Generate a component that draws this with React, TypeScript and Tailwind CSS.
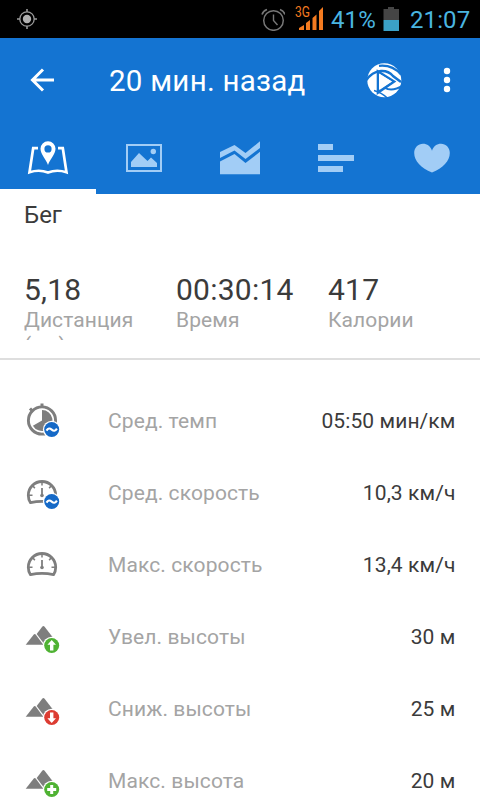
import type { ReactNode } from "react";

type Badge = "avg" | "up" | "down" | "plus";

function StatusBar() {
  return (
    <div className="flex h-[38px] items-center bg-black">
      <svg className="ml-[17px] shrink-0" width="20" height="20" viewBox="0 0 20 20" fill="none" stroke="#999">
        <circle cx="10" cy="10" r="7.2" strokeWidth="1.3" />
        <circle cx="10" cy="10" r="4.2" fill="#b0b0b0" stroke="none" />
        <path d="M10 0v3M10 17v3M0 10h3M17 10h3" strokeWidth="1.6" />
      </svg>
      <svg className="ml-[224px] shrink-0" width="24" height="24" viewBox="0 0 24 24" fill="none" stroke="#777">
        <circle cx="12.500" cy="13.500" r="9.800" strokeWidth="1.5" />
        <path d="M12.500 7.500v6l4 4.500" strokeWidth="1.4" />
        <path d="M1 7.500a8 8 0 0 1 5-5M24 7.500a8 8 0 0 0-5-5" strokeWidth="1.6" />
      </svg>
      <svg className="ml-[10px] shrink-0 overflow-visible" width="29" height="26" viewBox="0 0 29 26">
        <text x="0" y="11" fontSize="14" fontFamily="Roboto, sans-serif" fill="#f47b20" textLength="15" lengthAdjust="spacingAndGlyphs">3G</text>
        <path d="M4 24v-2l5-3v5zM11 24v-7l4-3v10zM17.500 24V12l4-3.500V24zM24 24V5l4-4V24z" fill="#f47b20" />
      </svg>
      <span className="ml-[7px] w-[46px] pt-[2px] text-[24px] leading-[36px] tracking-[0.1px] text-[#4ab5e0]">41%</span>
      <svg className="ml-[6px] shrink-0" width="16" height="24" viewBox="0 0 16 24">
        <path d="M5 0h6v2h5v11H.5V2H5z" fill="#454545" />
        <path d="M.5 13H16v11H.5z" fill="#3ba1c7" />
      </svg>
      <span className="ml-[11px] whitespace-nowrap pt-[2px] text-[24px] leading-[36px] tracking-[0.1px] text-[#4ab5e0]">21:07</span>
    </div>
  );
}

function ReplayIcon() {
  return (
    <svg className="shrink-0" width="40" height="40" viewBox="0 0 40 40">
      <circle cx="20.300" cy="20.300" r="17" fill="#fff" />
      <g fill="none" stroke="#1474d2">
        <path d="M2 20.500C6 14.500 11 11.500 17 11c6-.4 9 1.500 12 5l8 6" strokeWidth="2.400" />
        <path d="M15 5.800c9-1 16 1.700 22 8.700" strokeWidth="2.200" />
        <path d="M10 30.500c4 1 9 3.500 14 8" strokeWidth="1.300" />
        <path d="M21 27.800c5 3 10 2.500 18-2.500" strokeWidth="2" />
      </g>
      <path d="M14 11.500v21L30 21.500z" fill="#fff" stroke="#1474d2" strokeWidth="2.600" />
      <path d="M15 13.500v16L28 21.500z" fill="#fff" />
    </svg>
  );
}

function AppBar() {
  return (
    <div className="flex h-[84px] items-center">
      <svg className="ml-[30px] shrink-0" width="24" height="24" viewBox="0 0 24 24" fill="none" stroke="#fff" strokeWidth="3">
        <path d="M13 1.500 2.500 12 13 22.500M2.500 12H24" />
      </svg>
      <h1 className="ml-[55px] w-[200px] whitespace-nowrap pt-[2px] text-[29.500px] leading-[36px] tracking-[0.250px] text-white">20 мин. назад</h1>
      <div className="ml-[55px]">
        <ReplayIcon />
      </div>
      <svg className="ml-[39px] shrink-0" width="8" height="26" viewBox="0 0 8 26" fill="#fff">
        <circle cx="4" cy="4" r="3.200" />
        <circle cx="4" cy="13" r="3.200" />
        <circle cx="4" cy="22" r="3.200" />
      </svg>
    </div>
  );
}

function Tab({ active, children }: { active?: boolean; children: ReactNode }) {
  return (
    <div className={`flex h-[72px] w-24 justify-center border-b-[5px] pt-[16px] ${active ? "border-white" : "border-transparent"}`}>
      <svg width="44" height="40" viewBox="0 0 44 40" className="shrink-0">
        {children}
      </svg>
    </div>
  );
}

function Tabs() {
  return (
    <div className="flex">
      <Tab active>
        <path d="M12 10.200H7.200L3.500 34.300c6-2 12-2.300 18.500.2 6.500-2.500 12.500-2.200 18.500-.2L36.800 10.200H32" fill="none" stroke="#fff" strokeWidth="2.700" />
        <path fillRule="evenodd" d="M22 3.200a7.500 7.500 0 0 0-7.500 7.500C14.500 16 20 21 22 27c2-6 7.500-11 7.500-16.300A7.500 7.500 0 0 0 22 3.200zm0 4.100a3.600 3.600 0 1 1 0 7.200 3.600 3.600 0 0 1 0-7.200z" fill="#fff" />
      </Tab>
      <Tab>
        <path d="M5 7h34v26H5z" fill="none" stroke="#a2cdf6" strokeWidth="2" />
        <path d="M9 29v-5l8-9 8.500 8 3.500-3.500 6 5.500V29z" fill="#a2cdf6" />
        <circle cx="31.300" cy="13.500" r="2.700" fill="#a2cdf6" />
      </Tab>
      <Tab>
        <path d="M2 14 16.500 7l11 8L42 3.300V10l-14.500 11-11-8.500L2 20z" fill="#a2cdf6" />
        <path d="M2 23.500 16.500 16l11 9L42 13.800v22.500H2z" fill="#a2cdf6" />
      </Tab>
      <Tab>
        <path d="M4 6h15v6H4zM4 17h36v6H4zM4 28h25v6H4z" fill="#a2cdf6" />
      </Tab>
      <Tab>
        <path d="M22 34.500C11 30 4.200 23 4.200 15c0-5.500 4-9.300 8.800-9.300 4.200 0 7.500 2.300 9 7 1.500-4.700 4.800-7 9-7 4.800 0 8.800 3.800 8.800 9.300 0 8-6.800 15-17.800 19.500z" fill="#a2cdf6" />
      </Tab>
    </div>
  );
}

function BadgeMark({ kind }: { kind: Badge }) {
  const color = kind === "avg" ? "#1569c7" : kind === "down" ? "#dc3c32" : "#4fb233";
  return (
    <g>
      <circle cx="27.700" cy="26.500" r="8.800" fill="#fff" />
      <circle cx="27.700" cy="26.500" r="7.500" fill={color} />
      {kind === "avg" && (
        <path d="M22.500 27.600c1.600-2.700 3.400-2.500 5.200-1s3.600 1.700 5.200-1" fill="none" stroke="#fff" strokeWidth="2.100" />
      )}
      {kind === "up" && <path d="m27.700 21 4.300 4.800h-2.600v5.700H26v-5.700h-2.600z" fill="#fff" />}
      {kind === "down" && <path d="m27.700 32-4.300-4.800H26v-5.700h3.400v5.700H32z" fill="#fff" />}
      {kind === "plus" && <path d="M26.200 22h3v3h3v3h-3v3h-3v-3h-3v-3h3z" fill="#fff" />}
    </g>
  );
}

function Stopwatch() {
  return (
    <g>
      <circle cx="18" cy="17.500" r="13.600" fill="none" stroke="#7e7e7e" strokeWidth="2.900" />
      <path d="M18 17.500V7a10.500 10.500 0 1 1-9.100 15.700z" fill="#7e7e7e" />
      <path d="M18 .5v4M6 5.500l3 3" stroke="#7e7e7e" strokeWidth="3" />
    </g>
  );
}

function Gauge() {
  return (
    <g fill="none" stroke="#7e7e7e">
      <path d="M6.500 27.700C5.100 25.600 4.300 23.200 4.300 20.200a13.700 13.700 0 0 1 27.400 0c0 3-.8 5.400-2.200 7.500Q18 25.200 6.500 27.700z" strokeWidth="2.800" strokeLinejoin="round" />
      <path d="M18 7v3.500M8.700 10.900l2.200 2.200M27.300 10.900l-2.200 2.200M5 20.200h3.500M31 20.200h-3.500" strokeWidth="1.500" />
      <path d="M18 13v7" strokeWidth="1.800" />
      <circle cx="18" cy="20.500" r="1.800" fill="#7e7e7e" stroke="none" />
    </g>
  );
}

function Mountains() {
  return (
    <g fill="#7e7e7e">
      <path d="M1.700 25.700 9.600 15.700q1.200-1.400 2.300 0L19.300 25.700z" />
      <path d="m12.700 15 5.500-7.300q1.200-1.400 2.400 0L34.500 25.700H20.800z" />
    </g>
  );
}

const rows: { label: string; value: string; icon: ReactNode; badge?: Badge }[] = [
  { label: "Сред. темп", value: "05:50 мин/км", icon: <Stopwatch />, badge: "avg" },
  { label: "Сред. скорость", value: "10,3 км/ч", icon: <Gauge />, badge: "avg" },
  { label: "Макс. скорость", value: "13,4 км/ч", icon: <Gauge /> },
  { label: "Увел. высоты", value: "30 м", icon: <Mountains />, badge: "up" },
  { label: "Сниж. высоты", value: "25 м", icon: <Mountains />, badge: "down" },
  { label: "Макс. высота", value: "20 м", icon: <Mountains />, badge: "plus" },
];

const stats = [
  { value: "5,18", label: "Дистанция (км)" },
  { value: "00:30:14", label: "Время" },
  { value: "417", label: "Калории" },
];

export default function App() {
  return (
    <div className="h-[800px] w-[480px] overflow-hidden bg-white font-['Roboto',sans-serif] text-[#3b3b3b]">
      <StatusBar />
      <header className="bg-[#1474d2]">
        <AppBar />
        <Tabs />
      </header>
      <section className="h-[166px] border-b-2 border-[#dedede] px-6 pt-[6px]">
        <h2 className="text-[24px] leading-[30px]">Бег</h2>
        <div className="mt-[42px] flex">
          {stats.map((s) => (
            <div key={s.label} className="w-[152px] shrink-0">
              <div className="text-[30px] leading-[36px] tracking-[0.250px]">{s.value}</div>
              <div className="h-[32px] w-[120px] overflow-hidden text-[21px] leading-[25px] tracking-[0.1px] text-[#a4a4a4]">{s.label}</div>
            </div>
          ))}
        </div>
      </section>
      <section className="pt-[25px]">
        {rows.map((r) => (
          <div key={r.label} className="flex h-[72px] items-center pl-6 pr-[24.500px] text-[21px] leading-[26px] tracking-[0.1px]">
            <svg className="shrink-0" width="36" height="36" viewBox="0 0 36 36">
              {r.icon}
              {r.badge && <BadgeMark kind={r.badge} />}
            </svg>
            <span className="ml-12 text-[#a4a4a4]">{r.label}</span>
            <span className="ml-auto">{r.value}</span>
          </div>
        ))}
      </section>
    </div>
  );
}
